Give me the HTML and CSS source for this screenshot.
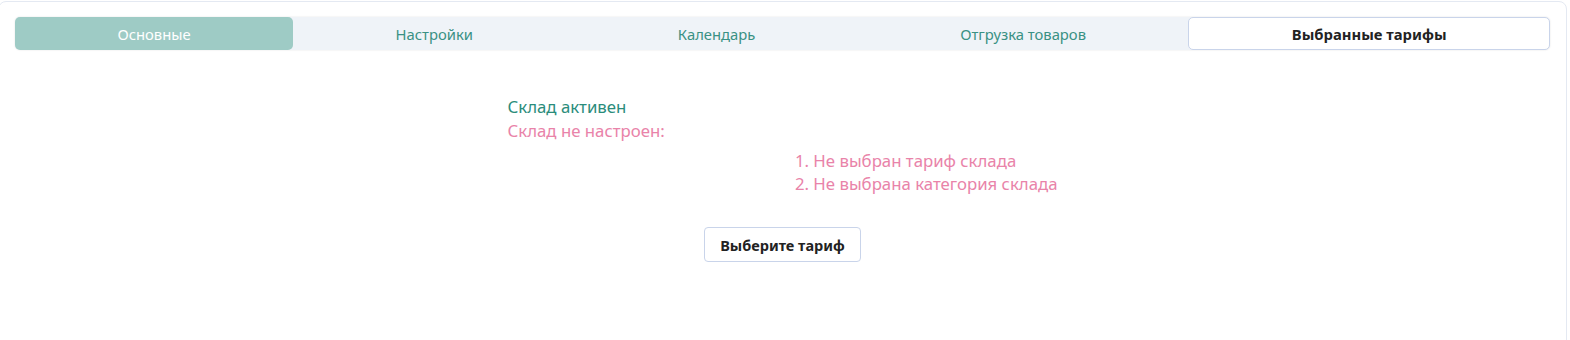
FILE: index.html
```html
<!DOCTYPE html>
<html lang="ru">
<head>
    <meta charset="UTF-8">
    <meta name="viewport" content="width=device-width, initial-scale=1.0">
    <title>Склад</title>
    <link rel="stylesheet" href="styles.css">
</head>
<body>
    <div class="card">
        <div class="tabs">
            <div class="tab active">Основные</div>
            <div class="tab">Настройки</div>
            <div class="tab">Календарь</div>
            <div class="tab">Отгрузка товаров</div>
            <div class="tab selected">Выбранные тарифы</div>
        </div>

        <div class="status">
            <div class="ok">Склад активен</div>
            <div class="bad">Склад не настроен:</div>
            <ol class="problems">
                <li>Не выбран тариф склада</li>
                <li>Не выбрана категория склада</li>
            </ol>
        </div>

        <div class="actions">
            <button class="choose-button">Выберите тариф</button>
        </div>
    </div>
</body>
</html>
```

FILE: styles.css
```css
body {
    font-family: 'Noto Sans', 'Open Sans', sans-serif;
    margin: 0;
    padding: 0;
    background-color: #ffffff;
    color: #222;
    overflow: hidden;
}
.card {
    margin: 1px 3px 0 -2px;
    border: 1px solid #e4e9f2;
    border-radius: 8px;
    padding: 15px 16px 0 16px;
    min-height: 400px;
}
.tabs {
    display: flex;
    background-color: #eff3f8;
    border-radius: 5px;
    box-shadow: 0 0 2px rgba(0, 0, 0, 0.12);
    height: 33px;
}
.tab {
    flex: auto;
    display: flex;
    align-items: center;
    justify-content: center;
    font-size: 14.8px;
    color: #3a9184;
    border-radius: 5px;
}
.tab.active {
    background-color: #9ecbc5;
    color: #ffffff;
}
.tab.selected {
    background-color: #ffffff;
    border: 1px solid #c9d4ea;
    color: #222;
    font-weight: bold;
}
.status {
    width: 550px;
    margin: 45px auto 0;
    display: flex;
    flex-direction: column;
    font-size: 16.8px;
    line-height: 24px;
}
.ok {
    color: #2a8c7b;
}
.bad {
    color: #e983a9;
}
.problems {
    align-self: flex-end;
    margin: 6px 0 0;
    padding-left: 18px;
    color: #e983a9;
    line-height: 23px;
}
.actions {
    display: flex;
    justify-content: center;
    margin-top: 32px;
}
.choose-button {
    font-family: inherit;
    font-size: 14.5px;
    font-weight: bold;
    color: #222;
    background-color: #ffffff;
    border: 1px solid #c9d4ea;
    border-radius: 4px;
    padding: 0 15px;
    height: 35px;
}
```
